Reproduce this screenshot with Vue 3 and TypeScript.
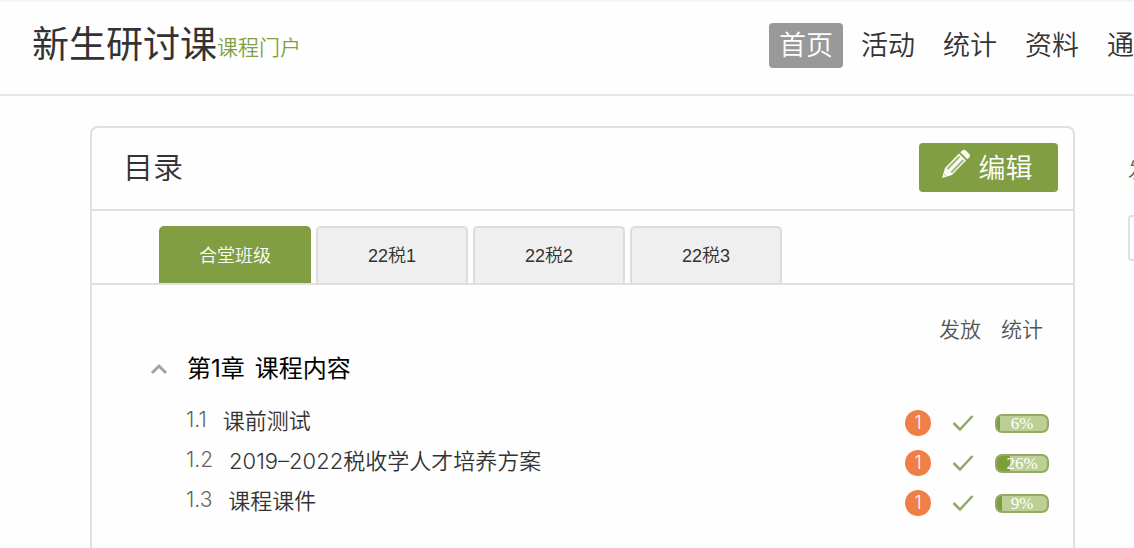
<script setup lang="ts">
import { ref } from 'vue'

interface Lesson {
  no: string
  title: string
  pending: number
  progress: number
}

const navItems: string[] = ['首页', '活动', '统计', '资料', '通知']
const classes: string[] = ['合堂班级', '22税1', '22税2', '22税3']
const lessons: Lesson[] = [
  { no: '1.1', title: '课前测试', pending: 1, progress: 6 },
  { no: '1.2', title: '2019–2022税收学人才培养方案', pending: 1, progress: 26 },
  { no: '1.3', title: '课程课件', pending: 1, progress: 9 },
]

const activeNav = ref(0)
const activeClass = ref(0)
const expanded = ref(true)
</script>

<template>
  <div class="page">
    <header class="top">
      <h1 class="course">新生研讨课</h1>
      <a class="portal" href="#">课程门户</a>
      <nav class="nav">
        <a
          v-for="(item, i) in navItems"
          :key="item"
          href="#"
          class="nav-item"
          :class="{ active: i === activeNav }"
          @click.prevent="activeNav = i"
        >{{ item }}</a>
      </nav>
    </header>

    <div class="columns">
      <main class="card">
        <div class="card-head">
          <h2>目录</h2>
          <button type="button" class="edit">
            <svg width="30" height="30" viewBox="0 0 30 30" aria-hidden="true">
              <path d="M1 29 L4 19 L18 4.500 L25 11.500 L11 26 Z" fill="#fbfcf8" />
              <path d="M19.300 3.200 L21.500 1.200 Q23 0 24.800 1.500 L28.300 5 Q29.800 6.500 28.500 8.300 L26.300 10.300 Z" fill="#fbfcf8" />
              <path d="M6.500 20 L18.500 7.500 M10.300 23.500 L22.300 11" stroke="#a3ba74" stroke-width="2" />
              <path d="M3 25 L5 27" stroke="#b9ca96" stroke-width="1" />
            </svg>
            <span>编辑</span>
          </button>
        </div>

        <div class="tabs" role="tablist">
          <button
            v-for="(name, i) in classes"
            :key="name"
            type="button"
            role="tab"
            class="tab"
            :class="{ active: i === activeClass }"
            :aria-selected="i === activeClass"
            @click="activeClass = i"
          >{{ name }}</button>
        </div>

        <section class="content">
          <div class="legend"><span>发放</span><span>统计</span></div>
          <button type="button" class="chapter" :aria-expanded="expanded" @click="expanded = !expanded">
            <svg class="caret" width="18" height="12" viewBox="0 0 18 12" aria-hidden="true">
              <path d="M2 10 L9 3 L16 10" fill="none" stroke="#a3a3a3" stroke-width="3" />
            </svg>
            <span class="chapter-no">第1章</span>
            <span>课程内容</span>
          </button>
          <ul v-if="expanded" class="lessons">
            <li v-for="l in lessons" :key="l.no">
              <span class="no">{{ l.no }}</span>
              <a class="lesson" href="#">{{ l.title }}</a>
              <span class="status">
                <span class="badge">{{ l.pending }}</span>
                <svg width="22" height="18" viewBox="0 0 22 18" aria-hidden="true">
                  <path d="M1.500 9 L8 15.500 L20.500 2" fill="none" stroke="#8fa963" stroke-width="2.500" />
                </svg>
                <span class="bar">
                  <span class="fill" :style="{ width: l.progress + '%' }"></span>
                  <span class="pct">{{ l.progress }}%</span>
                </span>
              </span>
            </li>
          </ul>
        </section>
      </main>

      <aside class="side">
        <p>发</p>
        <div class="side-box"></div>
      </aside>
    </div>
  </div>
</template>

<style>
body {
  background: #fefefe;
}
</style>

<style scoped>
.page {
  height: 100vh;
  overflow: hidden;
  display: flex;
  flex-direction: column;
  box-sizing: border-box;
  border-top: 2px solid #f1f5f4;
  font-family: Inter, "Noto Sans CJK SC", sans-serif;
  font-weight: 350;
  color: #333;
}
a {
  color: inherit;
  text-decoration: none;
}
button {
  font: inherit;
  color: inherit;
  border: 0;
  padding: 0;
  cursor: pointer;
}
h1, h2, p, ul {
  margin: 0;
  padding: 0;
  font-weight: inherit;
}
.top {
  flex: none;
  display: flex;
  align-items: center;
  height: 86px;
  padding: 0 0 6px 32px;
  border-bottom: 2px solid #e6e6e6;
  white-space: nowrap;
}
.course {
  font-size: 37px;
  font-weight: 400;
  line-height: 54px;
}
.portal {
  padding-top: 6px;
  font-size: 21px;
  line-height: 30px;
  color: #829e42;
}
.nav {
  display: flex;
  flex: 0 0 365px;
  gap: 8px;
  margin-left: auto;
  overflow: hidden;
}
.nav-item {
  flex: none;
  padding: 0 10px;
  border-radius: 4px;
  font-size: 27px;
  line-height: 45px;
}
.nav-item.active {
  background: #999;
  color: #fff;
}
.columns {
  flex: 1;
  display: grid;
  grid-template-columns: 1fr 6px;
  gap: 53px;
  padding: 30px 0 0 90px;
}
.card {
  border: 2px solid #e0e0e0;
  border-bottom: 0;
  border-radius: 8px 8px 0 0;
}
.card-head {
  display: flex;
  align-items: center;
  justify-content: space-between;
  height: 79px;
  padding: 0 15px 2px 31px;
  border-bottom: 2px solid #e0e0e0;
}
h2 {
  padding-bottom: 2px;
  font-size: 30px;
  line-height: 44px;
}
.edit {
  display: flex;
  align-items: center;
  justify-content: center;
  gap: 8px;
  width: 139px;
  height: 49px;
  padding: 0 4px 2px 0;
  border-radius: 4px;
  background: #829e42;
  color: #fff;
  font-size: 27px;
}
.edit svg {
  margin-bottom: 6px;
}
.tabs {
  display: flex;
  gap: 5px;
  padding: 15px 0 0 67px;
  border-bottom: 2px solid #e0e0e0;
}
.tab {
  width: 152px;
  height: 57px;
  box-sizing: border-box;
  padding-bottom: 3px;
  border: 2px solid #dcdcdc;
  border-bottom: 0;
  border-radius: 5px 5px 0 0;
  background: #efefef;
  font-family: "Liberation Sans", "Noto Sans CJK SC", sans-serif;
  font-size: 18px;
}
.tab.active {
  border-color: #829e42;
  background: #829e42;
  color: #fff;
}
.content {
  padding: 30px 24px 0 58px;
}
.legend {
  display: flex;
  justify-content: flex-end;
  gap: 20px;
  padding-right: 6px;
  font-size: 21px;
  line-height: 30px;
  color: #555;
}
.chapter {
  display: flex;
  align-items: center;
  margin-top: 6px;
  background: none;
  font-size: 24px;
  font-weight: 400;
  line-height: 36px;
  color: #000;
}
.chapter-no {
  margin: 0 10px 0 19px;
}
.lessons {
  list-style: none;
  padding: 12px 0 0 36px;
}
.lessons li {
  display: flex;
  align-items: center;
  height: 40px;
  font-size: 21px;
}
.no {
  margin-right: 16px;
  color: #666;
}
.lesson {
  font-size: 22px;
}
.status {
  display: flex;
  align-items: center;
  gap: 21px;
  margin-left: auto;
  padding-top: 8px;
}
.badge {
  width: 26px;
  height: 26px;
  border-radius: 50%;
  background: #f07f46;
  color: #fff;
  font-size: 18px;
  line-height: 26px;
  text-align: center;
}
.bar {
  position: relative;
  width: 54px;
  height: 19px;
  box-sizing: border-box;
  overflow: hidden;
  border: 2px solid #93ab66;
  border-radius: 7px;
  background: #bdcf95;
}
.fill {
  position: absolute;
  inset: 0 auto 0 0;
  background: #7c9f3c;
}
.pct {
  position: relative;
  display: block;
  color: #fff;
  font-family: "Liberation Serif", serif;
  font-size: 17px;
  line-height: 15px;
  text-align: center;
}
.side {
  overflow: hidden;
}
.side p {
  padding-top: 29px;
  font-size: 21px;
  line-height: 30px;
  color: #666;
}
.side-box {
  width: 200px;
  height: 42px;
  margin-top: 30px;
  border: 2px solid #e0e0e0;
  border-radius: 4px;
}
</style>
